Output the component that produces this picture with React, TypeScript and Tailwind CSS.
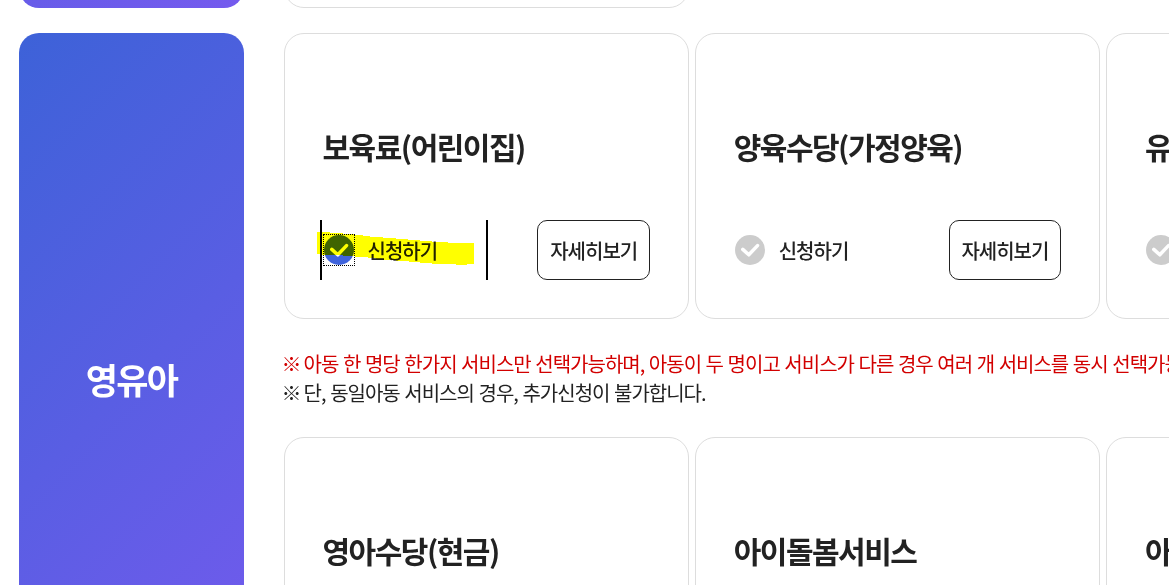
import React, { useState } from 'react';

interface Service {
    id: string;
    name: string;
}

const serviceRows: Service[][] = [
    [
        { id: 'childcare', name: '보육료(어린이집)' },
        { id: 'home-care', name: '양육수당(가정양육)' },
        { id: 'kindergarten', name: '유아학비(유치원)' }
    ],
    [
        { id: 'infant', name: '영아수당(현금)' },
        { id: 'sitter', name: '아이돌봄서비스' },
        { id: 'allowance', name: '아동수당' }
    ]
];

const CheckIcon = ({ checked }: { checked: boolean }) => (
    <svg viewBox="0 0 30 30" className="size-[30px] shrink-0">
        <circle cx="15" cy="15" r="15" fill={checked ? '#4064dc' : '#cccccc'} />
        <path
            d="M7.8 14.4l6 5.4 8.7-9.2"
            fill="none"
            stroke="#fff"
            strokeWidth="3.5"
            strokeLinecap="round"
            strokeLinejoin="round"
        />
    </svg>
);

// Marker stroke laid over the selected option
const Highlight = () => (
    <svg
        viewBox="0 0 157 33"
        className="pointer-events-none absolute -left-[5px] top-3 h-[33px] w-[157px] mix-blend-multiply"
        shapeRendering="crispEdges"
    >
        <path
            d="M0 0H13V1H26V2H38V3H46V4H53V5H66V6H79V7H91V8H103V9H115V10H131V11H157V32H150V33H139V32H115V31H103V30H92V29H79V28H66V27H59V26H51V25H38V24H26V23H5V22H0Z"
            fill="#ffff00"
        />
    </svg>
);

interface ServiceCardProps {
    service: Service;
    checked: boolean;
    onToggle: () => void;
}

const ServiceCard = ({ service, checked, onToggle }: ServiceCardProps) => (
    <div className="h-[286px] w-[405px] shrink-0 rounded-[20px] border border-[#dddddd] bg-white px-[38px] pt-[90px]">
        <h3 className="-ml-[0.5px] h-11 text-[30px] font-bold leading-[44px] tracking-[-0.05em]">{service.name}</h3>

        <div className="mt-[52px] flex h-[60px] items-center justify-between">
            <button
                onClick={onToggle}
                className={`relative flex h-[60px] items-center ${
                    checked ? '-ml-[3px] w-[168px] border-x-2 border-black pl-px' : 'ml-px'
                }`}
            >
                <span className={checked ? 'border border-dotted border-black' : ''}>
                    <CheckIcon checked={checked} />
                </span>
                <span className={`pt-px text-xl font-medium tracking-[-0.05em] ${checked ? 'ml-[12.5px]' : 'ml-[13.5px]'}`}>
                    신청하기
                </span>
                {checked && <Highlight />}
            </button>

            <button className="h-[60px] w-[112.6px] rounded-[10px] border border-[#222222] pt-px text-xl font-medium tracking-[-0.05em]">
                자세히보기
            </button>
        </div>
    </div>
);

const Note = ({ className, children }: { className?: string; children: React.ReactNode }) => (
    <p className={className}>
        <span className="-mr-[1.5px]">※</span> {children}
    </p>
);

export default function App() {
    const [selected, setSelected] = useState('childcare');

    const renderRow = (row: Service[]) => (
        <div className="flex gap-[6.2px]">
            {row.map((service) => (
                <ServiceCard
                    key={service.id}
                    service={service}
                    checked={selected === service.id}
                    onToggle={() => setSelected(service.id)}
                />
            ))}
        </div>
    );

    return (
        <div className="h-[585px] overflow-hidden bg-white pl-[19px] font-['Noto_Sans_CJK_KR',sans-serif] text-[#222222]">
            {/* Previous section */}
            <div className="flex h-2 items-end gap-10 overflow-hidden">
                <div className="h-[696px] w-[225px] shrink-0 rounded-[20px] bg-[linear-gradient(135deg,#3d62d8,#755aee)]" />
                <div className="h-[286px] w-[405px] shrink-0 rounded-[20px] border border-[#dddddd]" />
            </div>

            {/* Infants */}
            <section className="mt-[25px] flex gap-10">
                <h2 className="flex h-[696px] w-[225px] shrink-0 items-center justify-center rounded-[20px] bg-[linear-gradient(135deg,#3d62d8,#755aee)] pb-1 text-[35px] font-bold tracking-[-0.05em] text-white">
                    영유아
                </h2>

                <div className="shrink-0">
                    {renderRow(serviceRows[0])}
                    <div className="-ml-[2.5px] mt-[30px] h-[88px] w-[1000px] whitespace-nowrap text-xl leading-[29px] tracking-[-0.05em] [word-spacing:1.1px]">
                        <Note className="text-[#d20000]">
                            아동 한 명당 한가지 서비스만 선택가능하며, 아동이 두 명이고 서비스가 다른 경우 여러 개 서비스를 동시 선택가능합니다.
                        </Note>
                        <Note>단, 동일아동 서비스의 경우, 추가신청이 불가합니다.</Note>
                    </div>
                    {renderRow(serviceRows[1])}
                </div>
            </section>
        </div>
    );
}
